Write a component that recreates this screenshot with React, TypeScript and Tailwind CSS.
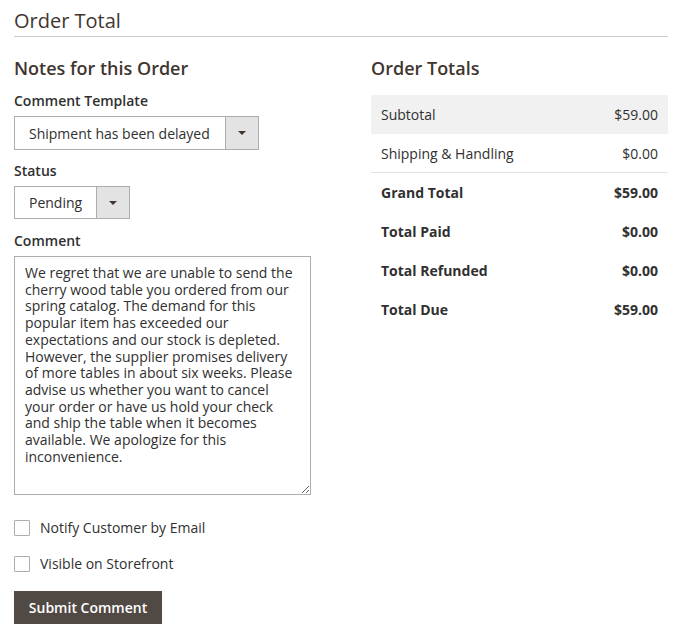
import React from "react";

const font = { fontFamily: '"Open Sans", "Liberation Sans", sans-serif' };

const comment =
  "We regret that we are unable to send the cherry wood table you ordered from our spring catalog. The demand for this popular item has exceeded our expectations and our stock is depleted. However, the supplier promises delivery of more tables in about six weeks. Please advise us whether you want to cancel your order or have us hold your check and ship the table when it becomes available. We apologize for this inconvenience.";

function Select({ label, width, height }: { label: string; width: string; height: string }) {
  return (
    <div className={`flex border border-[#adadad] bg-white ${width} ${height}`}>
      <div className="flex flex-1 items-center pl-[14px] text-[14px] text-[#303030]">{label}</div>
      <div className="flex w-[33px] items-center justify-center border-l border-[#adadad] bg-[#e3e3e3]">
        <div className="h-0 w-0 border-x-[4px] border-t-[4px] border-x-transparent border-t-[#41362f]" />
      </div>
    </div>
  );
}

function Row({ label, value, bold, bg, border }: { label: string; value: string; bold?: boolean; bg?: boolean; border?: boolean }) {
  return (
    <div
      className={`flex h-[39px] items-center justify-between px-[10px] text-[14px] text-[#303030] ${bold ? "font-bold" : ""} ${bg ? "bg-[#f1f1f1]" : ""} ${border ? "border-b border-[#e3e3e3]" : ""}`}
    >
      <span>{label}</span>
      <span>{value}</span>
    </div>
  );
}

export default function App() {
  return (
    <div className="min-h-[637px] w-[690px] bg-white pl-[14px] pr-[22px]" style={font}>
      <div className="border-b border-[#cccccc] pb-[4px] pt-[9px] text-[20px] leading-[23px] text-[#41362f]">
        Order Total
      </div>
      <div className="flex">
        <div className="w-[327px]">
          <h2 className="mt-[20px] text-[18px] font-semibold leading-[22px] text-[#41362f]">Notes for this Order</h2>
          <div className="mt-[13px] text-[14px] font-semibold leading-[17px] text-[#303030]">Comment Template</div>
          <div className="mt-[7px]">
            <Select label="Shipment has been delayed" width="w-[245px]" height="h-[34px]" />
          </div>
          <div className="mt-[12px] text-[14px] font-semibold leading-[17px] text-[#303030]">Status</div>
          <div className="mt-[7px]">
            <Select label="Pending" width="w-[116px]" height="h-[33px]" />
          </div>
          <div className="mt-[13px] text-[14px] font-semibold leading-[17px] text-[#303030]">Comment</div>
          <textarea
            className="mt-[7px] block h-[239px] w-[297px] resize-y border border-[#adadad] px-[10px] pb-[6px] pt-[8px] text-[14px] leading-[16.7px] text-[#303030] outline-none"
            style={font}
            defaultValue={comment}
          />
          <label className="mt-[25px] flex items-center gap-[10px] text-[14px] leading-[16px] text-[#303030]">
            <span className="block h-[16px] w-[16px] rounded-[1px] border border-[#adadad] bg-white" />
            Notify Customer by Email
          </label>
          <label className="mt-[20px] flex items-center gap-[10px] text-[14px] leading-[16px] text-[#303030]">
            <span className="block h-[16px] w-[16px] rounded-[1px] border border-[#adadad] bg-white" />
            Visible on Storefront
          </label>
          <button className="mt-[19px] flex h-[33px] w-[148px] items-center justify-center bg-[#514943] text-[14px] font-semibold text-white">
            Submit Comment
          </button>
        </div>
        <div className="ml-[30px] w-[297px]">
          <h2 className="mt-[20px] text-[18px] font-semibold leading-[22px] text-[#41362f]">Order Totals</h2>
          <div className="mt-[16px]">
            <Row label="Subtotal" value="$59.00" bg />
            <Row label="Shipping & Handling" value="$0.00" border />
            <Row label="Grand Total" value="$59.00" bold />
            <Row label="Total Paid" value="$0.00" bold />
            <Row label="Total Refunded" value="$0.00" bold />
            <Row label="Total Due" value="$59.00" bold />
          </div>
        </div>
      </div>
    </div>
  );
}
